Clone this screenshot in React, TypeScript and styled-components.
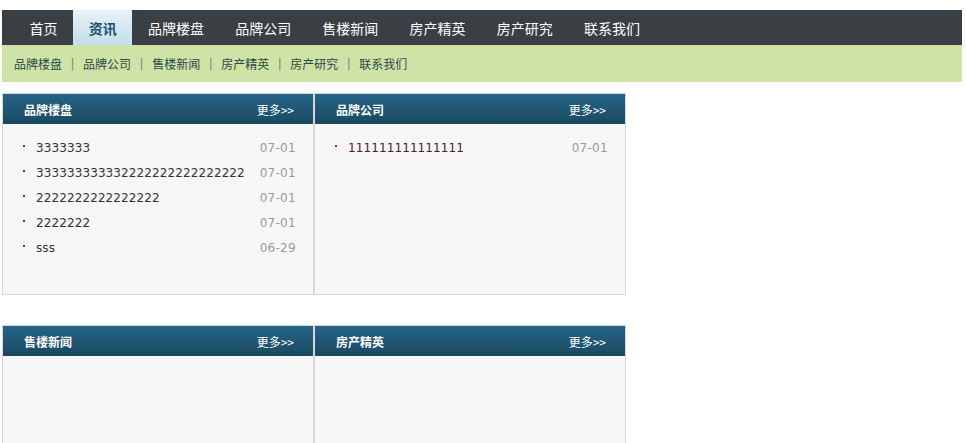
import React from 'react';
import styled, { createGlobalStyle } from 'styled-components';

const GlobalStyle = createGlobalStyle`
  html, body {
    margin: 0;
    padding: 0;
    background: #fff;
  }
  body {
    font-family: "DejaVu Sans", "Noto Sans CJK SC", sans-serif;
  }
`;

const Page = styled.div`
  padding: 10px 0 0 2px;
  width: 960px;
`;

const TopNav = styled.ul`
  display: flex;
  align-items: stretch;
  margin: 0;
  padding: 0 0 0 12px;
  list-style: none;
  height: 35px;
  background: #393f42;
`;

const NavItem = styled.li<{ $active?: boolean }>`
  display: flex;
  align-items: center;
  padding: 0 15.6px;
  font-family: "Noto Sans CJK SC", sans-serif;
  font-size: 14px;
  color: ${p => (p.$active ? '#1d4f6e' : '#ffffff')};
  font-weight: ${p => (p.$active ? 'bold' : 'normal')};
  background: ${p => (p.$active ? 'linear-gradient(#e8f3f8, #c3deea)' : 'transparent')};
`;

const SubNav = styled.div`
  display: flex;
  align-items: center;
  height: 37px;
  padding-left: 12px;
  background: #d0e3a6;
  font-family: "Noto Sans CJK SC", sans-serif;
  font-size: 12px;
  color: #2c4a48;
`;

const SubLink = styled.span``;

const Sep = styled.span`
  margin: 0 8.5px;
  font-family: "DejaVu Sans", sans-serif;
  color: #6f8a78;
`;

const Grid = styled.div`
  display: grid;
  grid-template-columns: 312px 312px;
  row-gap: 30px;
  margin-top: 11px;
  width: 624px;
`;

const Panel = styled.div`
  border: 1px solid #d6d9db;
  display: flex;
  flex-direction: column;
`;

const PanelHead = styled.div`
  height: 30px;
  display: flex;
  align-items: center;
  justify-content: space-between;
  padding: 0 19px 0 21px;
  background: linear-gradient(#256488, #1b4961);
  color: #fff;
  font-size: 12px;
  font-family: "Noto Sans CJK SC", sans-serif;
`;

const PanelTitle = styled.span`
  font-weight: bold;
`;

const More = styled.span`
  font-size: 12px;
`;

const PanelBody = styled.ul<{ $tall?: boolean }>`
  margin: 0;
  list-style: none;
  height: ${p => (p.$tall ? '170px' : '100px')};
  box-sizing: border-box;
  padding: 11px 17px 0 18px;
  background: #f7f7f7;
`;

const Row = styled.li`
  display: flex;
  align-items: center;
  height: 25px;
  font-size: 12px;
  letter-spacing: 0.1px;
`;

const Dot = styled.i`
  width: 2px;
  height: 2px;
  background: #a31d2e;
  margin: 0 11px 3px 2px;
`;

const RowTitle = styled.span<{ $visited?: boolean }>`
  flex: 1;
  color: ${p => (p.$visited ? '#46213a' : '#333')};
  white-space: nowrap;
`;

const RowDate = styled.span`
  color: #9a9a9a;
  white-space: nowrap;
  margin-left: 8px;
  letter-spacing: 0.3px;
`;

type Item = { title: string; date: string; visited?: boolean };

const panels: { title: string; items: Item[]; tall: boolean }[] = [
  {
    title: '品牌楼盘',
    tall: true,
    items: [
      { title: '3333333', date: '07-01' },
      { title: '333333333332222222222222222', date: '07-01' },
      { title: '2222222222222222', date: '07-01' },
      { title: '2222222', date: '07-01' },
      { title: 'sss', date: '06-29' },
    ],
  },
  {
    title: '品牌公司',
    tall: true,
    items: [{ title: '111111111111111', date: '07-01', visited: true }],
  },
  { title: '售楼新闻', tall: false, items: [] },
  { title: '房产精英', tall: false, items: [] },
];

const mainNav = ['首页', '资讯', '品牌楼盘', '品牌公司', '售楼新闻', '房产精英', '房产研究', '联系我们'];
const subNav = ['品牌楼盘', '品牌公司', '售楼新闻', '房产精英', '房产研究', '联系我们'];

export default function App() {
  return (
    <Page>
      <GlobalStyle />
      <TopNav>
        {mainNav.map(n => (
          <NavItem key={n} $active={n === '资讯'}>{n}</NavItem>
        ))}
      </TopNav>
      <SubNav>
        {subNav.map((n, i) => (
          <React.Fragment key={n}>
            {i > 0 && <Sep>|</Sep>}
            <SubLink>{n}</SubLink>
          </React.Fragment>
        ))}
      </SubNav>
      <Grid>
        {panels.map(p => (
          <Panel key={p.title}>
            <PanelHead>
              <PanelTitle>{p.title}</PanelTitle>
              <More>更多&gt;&gt;</More>
            </PanelHead>
            <PanelBody $tall={p.tall}>
              {p.items.map(it => (
                <Row key={it.title}>
                  <Dot />
                  <RowTitle $visited={it.visited}>{it.title}</RowTitle>
                  <RowDate>{it.date}</RowDate>
                </Row>
              ))}
            </PanelBody>
          </Panel>
        ))}
      </Grid>
    </Page>
  );
}
